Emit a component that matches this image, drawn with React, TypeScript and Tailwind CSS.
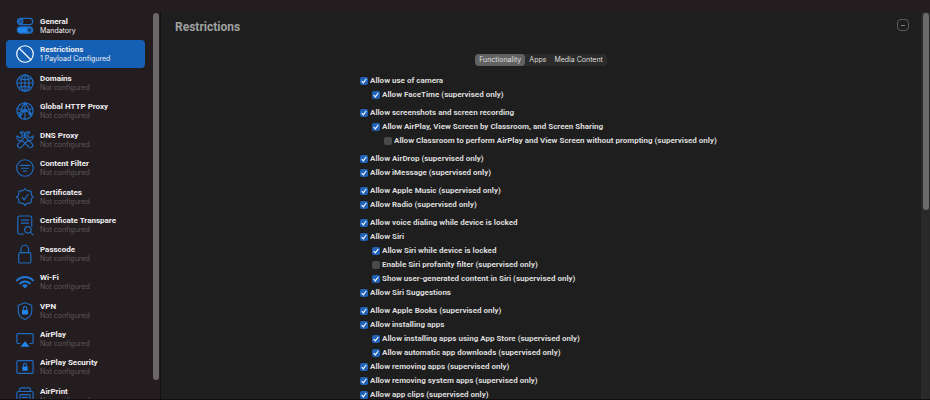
import { useState } from "react";
import type { ReactNode } from "react";
import clsx from "clsx";

type Payload = {
  name: string;
  status: string;
  icon: ReactNode;
};

type Restriction = {
  label: string;
  level?: number;
  off?: boolean;
};

const globe = (
  <>
    <circle cx="10" cy="10" r="9" />
    <ellipse cx="10" cy="10" rx="4.5" ry="9" />
    <path d="M10 1v18M1 10h18M3 5q7 2.6 14 0M3 15q7-2.6 14 0" />
  </>
);

const payloads: Payload[] = [
  {
    name: "General",
    status: "Mandatory",
    icon: (
      <>
        <rect x="1.5" y="1.5" width="17" height="7" rx="3.5" />
        <circle cx="5" cy="5" r="2.6" fill="#1a4f8c" />
        <rect x="1.5" y="11" width="17" height="7" rx="3.5" fill="#1f86f0" />
        <circle cx="15" cy="14.5" r="2.6" fill="#123c6e" />
      </>
    ),
  },
  {
    name: "Restrictions",
    status: "1 Payload Configured",
    icon: (
      <>
        <circle cx="10" cy="10" r="9.2" />
        <path d="M3.6 3.6l12.8 12.8" />
      </>
    ),
  },
  { name: "Domains", status: "Not configured", icon: globe },
  {
    name: "Global HTTP Proxy",
    status: "Not configured",
    icon: (
      <>
        <circle cx="10" cy="10" r="9" />
        <path d="M10 1Q4 8 5 17M10 1q5.5 6 6 14M10 1v18M2 7.5q8 3 16 0M1.5 12.5L10 9l8 5M10 9l-6 7" />
        <circle cx="10" cy="9" r="1.2" fill="currentColor" />
        <circle cx="4.6" cy="14.5" r="1.2" fill="currentColor" />
        <circle cx="15.6" cy="13" r="1.2" fill="currentColor" />
      </>
    ),
  },
  {
    name: "DNS Proxy",
    status: "Not configured",
    icon: (
      <>
        <path d="M1 5.5a4.6 4.6 0 0 0 6 5.200L14 17.500a2.500 2.500 0 0 0 4-3.200L10.700 7a4.600 4.600 0 0 0-6.200-5.600L7.300 4.200 6.700 6.700 4.200 7.300z" />
        <path d="M19 5.500a4.600 4.600 0 0 1-6 5.200L6.400 17.600a2.500 2.500 0 0 1-4-3.400L9.300 7a4.600 4.600 0 0 1 6.200-5.600L12.700 4.200l.6 2.500 2.500.6z" />
      </>
    ),
  },
  {
    name: "Content Filter",
    status: "Not configured",
    icon: (
      <>
        <circle cx="10" cy="10" r="9.2" />
        <path d="M4.5 7h11M6.2 10.3h7.6M8.2 13.5h3.6" />
      </>
    ),
  },
  {
    name: "Certificates",
    status: "Not configured",
    icon: (
      <>
        <path d="M10 .6q1.4 2.4 2.8 2.4t3.8.4q.4 2.4.4 3.8T19.4 10q-2.4 1.4-2.4 2.8t-.4 3.8q-2.4.4-3.8.4T10 19.4q-1.4-2.4-2.8-2.4t-3.8-.4Q3 14.2 3 12.8T.6 10Q3 8.6 3 7.2t.4-3.8Q5.8 3 7.2 3T10 .6z" />
        <path d="M6.8 10.4l2.3 2.8 4.3-6" />
      </>
    ),
  },
  {
    name: "Certificate Transpare",
    status: "Not configured",
    icon: (
      <>
        <path d="M8.5 20H4a2 2 0 0 1-2-2V2a2 2 0 0 1 2-2h11.500a2 2 0 0 1 2 2v9.500M6 4.500h8M6 8h8" />
        <circle cx="13.2" cy="15.4" r="3.6" />
        <path d="M16 18.2l3 2.8" />
      </>
    ),
  },
  {
    name: "Passcode",
    status: "Not configured",
    icon: (
      <>
        <rect x="3" y="8.5" width="13.5" height="11.5" rx="1.5" />
        <path d="M5.5 8.5V4.5a4.2 4.2 0 0 1 8.4 0v4" />
      </>
    ),
  },
  {
    name: "Wi-Fi",
    status: "Not configured",
    icon: (
      <g stroke="#1f78d8">
        <path strokeWidth="2.2" d="M1 8.2a12.7 12.7 0 0 1 18 0M4.6 11.6a7.7 7.7 0 0 1 10.8 0" />
        <path fill="#1f78d8" stroke="none" d="M6.8 14a4.6 4.6 0 0 1 6.4 0L10 17.2z" />
      </g>
    ),
  },
  {
    name: "VPN",
    status: "Not configured",
    icon: (
      <>
        <path d="M10 .8l7.5 2.8v6.4c0 4.6-3.4 7.8-7.5 9.4-4.1-1.6-7.5-4.8-7.5-9.4V3.6z" />
        <rect x="6.6" y="9" width="6.8" height="5" rx=".6" fill="#1f86f0" stroke="none" />
        <path d="M8.2 9V7a1.8 1.8 0 0 1 3.6 0v2" />
      </>
    ),
  },
  {
    name: "AirPlay",
    status: "Not configured",
    icon: (
      <>
        <path d="M4.5 15H2.5a1.5 1.5 0 0 1-1.5-1.5v-8A1.5 1.5 0 0 1 2.5 4h15A1.5 1.5 0 0 1 19 5.5v8a1.5 1.5 0 0 1-1.5 1.5h-2" />
        <path fill="#1f86f0" stroke="none" d="M10 12.5l5 6H5z" />
      </>
    ),
  },
  {
    name: "AirPlay Security",
    status: "Not configured",
    icon: (
      <>
        <rect x="1" y="3" width="18" height="14" rx="1.5" />
        <rect x="7" y="9.5" width="6" height="4.6" rx=".6" fill="#1f86f0" stroke="none" />
        <path d="M8.3 9.5V7.7a1.7 1.7 0 0 1 3.4 0v1.8" />
      </>
    ),
  },
  {
    name: "AirPrint",
    status: "Not configured",
    icon: (
      <>
        <path d="M4 5V2.5A1.5 1.5 0 0 1 5.5 1h9A1.5 1.5 0 0 1 16 2.5V5M4 16H2.5A1.5 1.5 0 0 1 1 14.5v-8A1.5 1.5 0 0 1 2.5 5h15A1.5 1.5 0 0 1 19 6.5v8a1.5 1.5 0 0 1-1.5 1.5H16" />
        <rect x="4.5" y="8.5" width="11" height="11" rx="1" />
        <path d="M7 11.5h6M7 14h6" />
      </>
    ),
  },
];

const groups: Restriction[][] = [
  [{ label: "Allow use of camera" }, { label: "Allow FaceTime (supervised only)", level: 1 }],
  [
    { label: "Allow screenshots and screen recording" },
    { label: "Allow AirPlay, View Screen by Classroom, and Screen Sharing", level: 1 },
    {
      label: "Allow Classroom to perform AirPlay and View Screen without prompting (supervised only)",
      level: 2,
      off: true,
    },
  ],
  [{ label: "Allow AirDrop (supervised only)" }, { label: "Allow iMessage (supervised only)" }],
  [{ label: "Allow Apple Music (supervised only)" }, { label: "Allow Radio (supervised only)" }],
  [
    { label: "Allow voice dialing while device is locked" },
    { label: "Allow Siri" },
    { label: "Allow Siri while device is locked", level: 1 },
    { label: "Enable Siri profanity filter (supervised only)", level: 1, off: true },
    { label: "Show user-generated content in Siri (supervised only)", level: 1 },
    { label: "Allow Siri Suggestions" },
  ],
  [
    { label: "Allow Apple Books (supervised only)" },
    { label: "Allow installing apps" },
    { label: "Allow installing apps using App Store (supervised only)", level: 1 },
    { label: "Allow automatic app downloads (supervised only)", level: 1 },
    { label: "Allow removing apps (supervised only)" },
    { label: "Allow removing system apps (supervised only)" },
    { label: "Allow app clips (supervised only)" },
  ],
];

const tabs = ["Functionality", "Apps", "Media Content"];
const indents = ["", "pl-3", "pl-6"];

function CheckRow({ label, level = 0, off = false }: Restriction) {
  return (
    <label className={clsx("flex h-3.5 items-center gap-0.5 whitespace-nowrap", indents[level])}>
      <span className="grid size-2 shrink-0">
        <input
          type="checkbox"
          defaultChecked={!off}
          className="peer col-start-1 row-start-1 size-2 appearance-none rounded-xs bg-[#4a4a4a] checked:bg-[#1f62b8]"
        />
        <svg
          viewBox="0 0 8 8"
          className="pointer-events-none invisible col-start-1 row-start-1 size-2 peer-checked:visible"
          fill="none"
          stroke="#fff"
          strokeWidth="1.1"
          strokeLinecap="round"
        >
          <path d="M2 4.3l1.4 1.6L6 2.2" />
        </svg>
      </span>
      {label}
    </label>
  );
}

export default function App() {
  const [selected, setSelected] = useState("Restrictions");
  const [tab, setTab] = useState("Functionality");

  return (
    <div className="flex h-screen flex-col overflow-hidden border-b border-[#120d10] bg-[#231d20] pt-3 font-['Inter',sans-serif] text-[7px]">
      <div className="flex min-h-0 flex-1">
        {/* Sidebar */}
        <aside className="flex w-40 shrink-0">
          <nav className="-mb-[11px] flex flex-1 flex-col justify-between pl-1.5">
            {payloads.map((p) => {
              const active = p.name === selected;
              return (
                <button
                  key={p.name}
                  type="button"
                  onClick={() => setSelected(p.name)}
                  className={clsx(
                    "flex h-7 w-[139px] shrink-0 items-center gap-1.5 rounded-sm pl-2.5 text-left",
                    active && "bg-[#1560b5]"
                  )}
                >
                  <svg
                    viewBox="0 0 20 20"
                    className={clsx("size-[18px] shrink-0 overflow-visible", active ? "text-white" : "text-[#1f6cc2]")}
                    fill="none"
                    stroke="currentColor"
                    strokeWidth="1.3"
                    strokeLinecap="round"
                    strokeLinejoin="round"
                  >
                    {p.icon}
                  </svg>
                  <span className="flex flex-col whitespace-nowrap leading-[9px]">
                    <span className="font-['Roboto',sans-serif] text-[8px] font-bold text-[#f0eef0]">{p.name}</span>
                    <span className={p.status === "Not configured" ? "text-[#5e585a]" : "text-[#f0eef0]"}>
                      {p.status}
                    </span>
                  </span>
                </button>
              );
            })}
          </nav>
          <div className="w-[7px] pt-px pr-px">
            <div className="h-[95%] rounded-full bg-[#6b6669]" />
          </div>
        </aside>

        {/* Payload settings */}
        <main className="min-w-0 flex-1 border-l border-[#121212] bg-[#1e1e1e]">
          <header className="flex items-start justify-between pt-1.5 pr-3 pl-3.5">
            <h1 className="font-['Roboto',sans-serif] text-[12px] leading-[18px] font-bold text-[#a0a0a0]">
              Restrictions
            </h1>
            <button
              type="button"
              aria-label="Remove payload"
              className="mt-px flex size-3 items-center justify-center rounded-sm border border-[#5a5a5a]"
            >
              <span className="h-px w-1 bg-[#808080]" />
            </button>
          </header>

          <div className="mt-[18px] flex justify-center">
            <div role="tablist" className="flex h-3 rounded-sm bg-[#2b2b2b] leading-3 text-[#dedede]">
              {tabs.map((t) => (
                <button
                  key={t}
                  type="button"
                  role="tab"
                  aria-selected={t === tab}
                  onClick={() => setTab(t)}
                  className={clsx("rounded-sm px-1", t === tab && "bg-[#626262]")}
                >
                  {t}
                </button>
              ))}
            </div>
          </div>

          <form className="mx-auto mt-2 flex w-[362px] flex-col gap-1 font-['Roboto',sans-serif] text-[8px] font-bold text-[#dcdcdc]">
            {groups.map((rows, i) => (
              <div key={i}>
                {rows.map((r) => (
                  <CheckRow key={r.label} {...r} />
                ))}
              </div>
            ))}
          </form>
        </main>

        <div className="w-[9px] shrink-0 bg-[#292929] pt-px pr-px pl-0.5">
          <div className="h-[51%] rounded-full bg-[#6a6a6a]" />
        </div>
      </div>
    </div>
  );
}
